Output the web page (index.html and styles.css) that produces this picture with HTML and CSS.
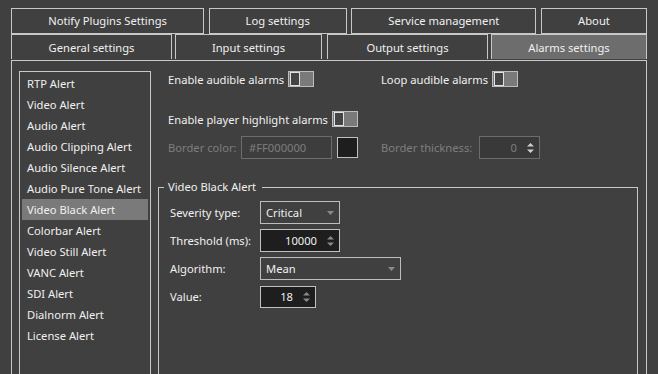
FILE: index.html
```html
<!DOCTYPE html>
<html lang="en">
<head>
  <meta charset="UTF-8" />
  <meta name="viewport" content="width=device-width, initial-scale=1" />
  <title>Alarms settings</title>
  <link rel="stylesheet" href="styles.css">
</head>
<body>
  <div class="window">
    <div class="tabrow">
      <div class="tab w-notify">Notify Plugins Settings</div>
      <div class="tab w-log">Log settings</div>
      <div class="tab w-service">Service management</div>
      <div class="tab w-about">About</div>
    </div>
    <div class="tabrow lower">
      <div class="tab w-general">General settings</div>
      <div class="tab w-input">Input settings</div>
      <div class="tab w-output">Output settings</div>
      <div class="tab w-alarms active">Alarms settings</div>
    </div>

    <div class="panel">
      <ul class="alert-list">
        <li>RTP Alert</li>
        <li>Video Alert</li>
        <li>Audio Alert</li>
        <li>Audio Clipping Alert</li>
        <li>Audio Silence Alert</li>
        <li>Audio Pure Tone Alert</li>
        <li class="selected">Video Black Alert</li>
        <li>Colorbar Alert</li>
        <li>Video Still Alert</li>
        <li>VANC Alert</li>
        <li>SDI Alert</li>
        <li>Dialnorm Alert</li>
        <li>License Alert</li>
      </ul>

      <div class="settings">
        <div class="opts row-a">
          <div class="opt">
            <span>Enable audible alarms</span>
            <span class="toggle"><span class="knob"></span></span>
          </div>
          <div class="opt">
            <span>Loop audible alarms</span>
            <span class="toggle"><span class="knob"></span></span>
          </div>
        </div>

        <div class="opt row-b">
          <span>Enable player highlight alarms</span>
          <span class="toggle"><span class="knob"></span></span>
        </div>

        <div class="opts row-c">
          <div class="opt">
            <span class="dis lbl-color">Border color:</span>
            <div class="field disabled w-colorfield">#FF000000</div>
            <div class="swatch"></div>
          </div>
          <div class="opt">
            <span class="dis lbl-thick">Border thickness:</span>
            <div class="spin disabled w-thick">
              <span class="val">0</span>
              <svg class="arrows" width="7" height="10" viewBox="0 0 7 10"><path d="M3.5 0 L7 3.5 L0 3.5 Z M0 6.5 L7 6.5 L3.5 10 Z"/></svg>
            </div>
          </div>
        </div>

        <fieldset class="group">
          <legend>Video Black Alert</legend>
          <div class="form">
            <span>Severity type:</span>
            <div class="combo w-severity">
              <span>Critical</span>
              <svg class="drop" width="7" height="4" viewBox="0 0 7 4"><path d="M0 0 L7 0 L3.5 4 Z"/></svg>
            </div>

            <span>Threshold (ms):</span>
            <div class="spin w-threshold">
              <span class="val">10000</span>
              <svg class="arrows" width="7" height="10" viewBox="0 0 7 10"><path d="M3.5 0 L7 3.5 L0 3.5 Z M0 6.5 L7 6.5 L3.5 10 Z"/></svg>
            </div>

            <span>Algorithm:</span>
            <div class="combo w-algorithm">
              <span>Mean</span>
              <svg class="drop" width="7" height="4" viewBox="0 0 7 4"><path d="M0 0 L7 0 L3.5 4 Z"/></svg>
            </div>

            <span>Value:</span>
            <div class="spin w-value short">
              <span class="val">18</span>
              <svg class="arrows" width="7" height="10" viewBox="0 0 7 10"><path d="M3.5 0 L7 3.5 L0 3.5 Z M0 6.5 L7 6.5 L3.5 10 Z"/></svg>
            </div>
          </div>
        </fieldset>
      </div>
    </div>
  </div>
</body>
</html>
```

FILE: styles.css
```css
body {
  margin: 0;
  background: #404040;
  color: #f0f0f0;
  font-family: "Noto Sans", "Open Sans", sans-serif;
  font-size: 11.2px;
  overflow: hidden;
}
.window {
  padding: 8px 0 0 11px;
  width: 636px;
}
span {
  white-space: nowrap;
}

/* tabs */
.tabrow {
  display: flex;
  justify-content: space-between;
  height: 26px;
}
.tab {
  box-sizing: border-box;
  height: 26px;
  border: 1px solid #c8c8c8;
  display: flex;
  align-items: center;
  justify-content: center;
  padding-bottom: 1px;
}
.tabrow.lower .tab {
  height: 25px;
  border-bottom: none;
  padding-bottom: 0;
}
.tab.active {
  background: #6d6d6d;
}
.w-notify { width: 193px; }
.w-log { width: 138px; }
.w-service { width: 185px; }
.w-about { width: 106px; }
.w-general { width: 161px; }
.w-input { width: 147px; }
.w-output { width: 161px; }
.w-alarms { width: 156px; }
.w-input { margin-right: 2px; }

/* panel */
.panel {
  box-sizing: border-box;
  height: 330px;
  border: 1px solid #c8c8c8;
  padding: 10px 8px 0 7px;
  display: flex;
  gap: 7px;
}
.alert-list {
  box-sizing: border-box;
  width: 132px;
  height: 330px;
  margin: 0;
  padding: 1px;
  list-style: none;
  border: 1px solid #c8c8c8;
}
.alert-list li {
  height: 21px;
  line-height: 21px;
  padding-left: 6px;
  white-space: nowrap;
}
.alert-list li.selected {
  background: #7a7a7a;
  margin: 0 1px;
  padding-left: 5px;
}

.settings {
  width: 480px;
}
.opts {
  display: grid;
  grid-template-columns: 213px auto;
  padding-left: 10px;
}
.opt {
  display: flex;
  align-items: center;
  gap: 4px;
  height: 16px;
}
.row-b {
  margin-top: 24px;
  padding-left: 10px;
}
.row-c {
  margin-top: 9px;
}
.row-c .opt {
  height: 23px;
  gap: 0;
}
.dis {
  color: #7e7e7e;
}
.lbl-color { width: 73px; }
.lbl-thick { width: 98px; }

.toggle {
  box-sizing: border-box;
  width: 26px;
  height: 16px;
  border: 1px solid #bcbcbc;
  background: #7a7a7a;
  padding: 0 1px;
  display: flex;
}
.knob {
  box-sizing: border-box;
  width: 10px;
  height: 14px;
  border: 1px solid #e2e2e2;
  background: #444444;
}

.field {
  box-sizing: border-box;
  height: 23px;
  border: 1px solid #c0c0c0;
  display: flex;
  align-items: center;
  padding-left: 7px;
}
.field.disabled {
  border-color: #6c6c6c;
  color: #7e7e7e;
  background: #3d3d3d;
}
.w-colorfield { width: 91px; }
.swatch {
  box-sizing: border-box;
  width: 21px;
  height: 21px;
  margin-left: 5px;
  border: 1px solid #c0c0c0;
  background: #1e1e1e;
}

.spin {
  box-sizing: border-box;
  height: 23px;
  border: 1px solid #c0c0c0;
  background: #1e1e1e;
  display: flex;
  align-items: center;
  padding-right: 5px;
}
.spin .val {
  flex: 1;
  text-align: right;
}
.spin .arrows {
  margin-left: 10px;
  fill: #8a8a8a;
}
.spin.disabled {
  border-color: #6c6c6c;
  background: #393939;
  color: #7e7e7e;
}
.spin.disabled .arrows {
  fill: #cfcfcf;
}
.spin.short {
  height: 22px;
}
.w-thick { width: 61px; }
.w-threshold { width: 80px; }
.w-value { width: 56px; }

.combo {
  box-sizing: border-box;
  height: 23px;
  border: 1px solid #bdbdbd;
  display: flex;
  align-items: center;
  justify-content: space-between;
  padding: 0 5px 0 5px;
}
.combo .drop {
  fill: #8a8a8a;
}
.w-severity { width: 80px; }
.w-algorithm { width: 141px; }

/* group box */
.group {
  margin: 20px 0 0 0;
  padding: 0;
  height: 220px;
  border: 1px solid #c8c8c8;
  border-bottom: none;
  min-width: 0;
}
.group legend {
  margin-left: 5px;
  padding: 0 6px 0 4px;
  line-height: 16px;
}
.form {
  display: grid;
  grid-template-columns: 90px auto;
  grid-auto-rows: 23px;
  row-gap: 5px;
  align-items: center;
  justify-items: start;
  padding: 6px 0 0 11px;
}
```
